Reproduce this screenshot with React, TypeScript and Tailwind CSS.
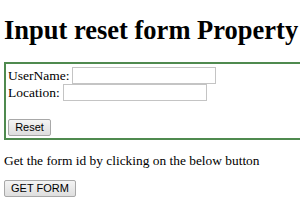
import React from "react";

export default function App() {
  return (
    <div className="w-[300px] h-[210px] overflow-hidden bg-white px-[4px] text-black" style={{ fontFamily: '"Liberation Serif", serif' }}>
      <h1 className="mt-[15px] text-[26.5px] leading-[30px] font-bold whitespace-nowrap">Input reset form Property</h1>
      <form className="mt-[17px] w-[310px] border-2 border-[#4f8a4f] px-[2px] pt-[2px] pb-[1px] text-[13.5px]">
        <div className="flex items-center h-[18px]">
          <span className="leading-[17px]">UserName:</span>
          <input className="ml-[3px] w-[144px] h-[17px] border border-[#c4c4c4] bg-white" />
        </div>
        <div className="flex items-center h-[17px]">
          <span className="leading-[17px]">Location:</span>
          <input className="ml-[3px] w-[144px] h-[17px] border border-[#c4c4c4] bg-white" />
        </div>
        <div className="h-[16px]"></div>
        <button type="button" className="h-[17px] w-[43px] border border-[#a8a8a8] rounded-[2px] bg-gradient-to-b from-[#f4f4f4] to-[#dedede] text-[11px] leading-none" style={{ fontFamily: '"Liberation Sans", Arial, sans-serif' }}>Reset</button>
      </form>
      <p className="mt-[13px] text-[13.4px] leading-[16px] whitespace-nowrap">Get the form id by clicking on the below button</p>
      <button type="button" className="mt-[11px] h-[17px] w-[72px] border border-[#a8a8a8] rounded-[2px] bg-gradient-to-b from-[#f4f4f4] to-[#dedede] text-[11px] leading-none" style={{ fontFamily: '"Liberation Sans", Arial, sans-serif' }}>GET FORM</button>
    </div>
  );
}
